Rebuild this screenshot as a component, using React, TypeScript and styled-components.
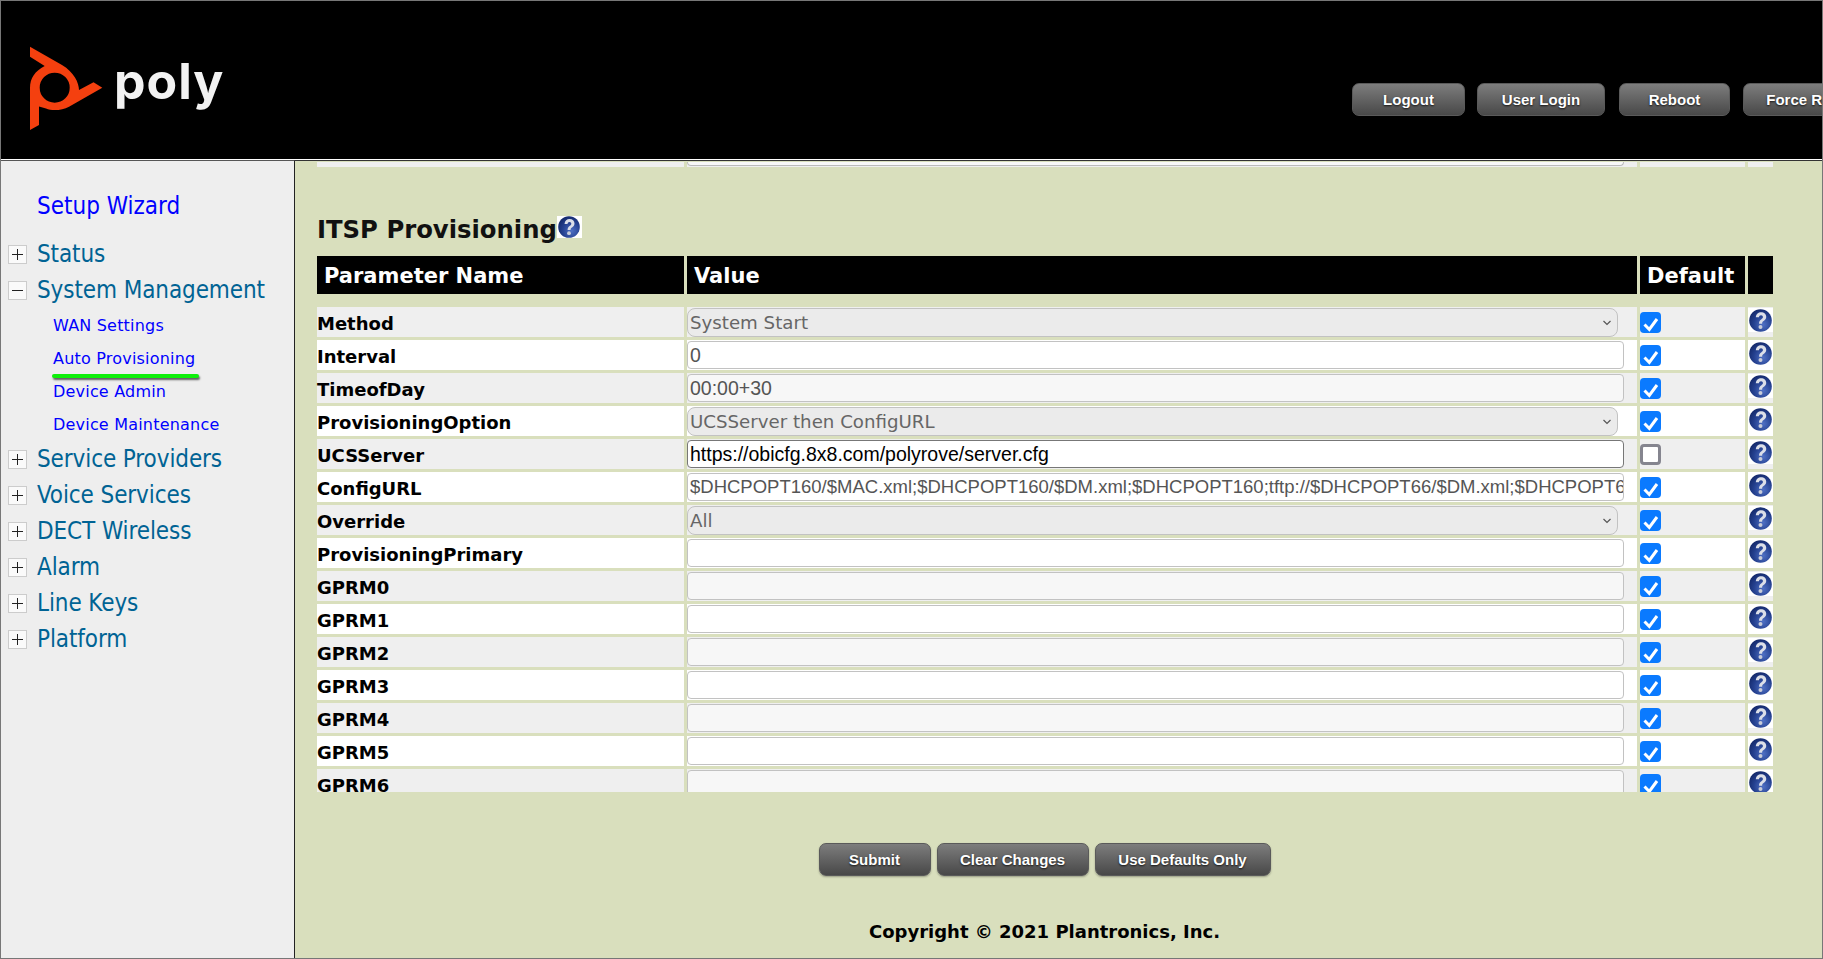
import React from "react";
import styled, { createGlobalStyle } from "styled-components";

const VERDANA = `"DejaVu Sans", sans-serif`;
const HELVETICA = `"Liberation Sans", Arial, sans-serif`;

type Row = {
  name: string;
  kind: "select" | "input";
  value?: string;
  locked?: boolean;
};

const ROWS: Row[] = [
  { name: "Method", kind: "select", value: "System Start", locked: true },
  { name: "Interval", kind: "input", value: "0", locked: true },
  { name: "TimeofDay", kind: "input", value: "00:00+30", locked: true },
  { name: "ProvisioningOption", kind: "select", value: "UCSServer then ConfigURL", locked: true },
  { name: "UCSServer", kind: "input", value: "https://obicfg.8x8.com/polyrove/server.cfg" },
  {
    name: "ConfigURL",
    kind: "input",
    value: "$DHCPOPT160/$MAC.xml;$DHCPOPT160/$DM.xml;$DHCPOPT160;tftp://$DHCPOPT66/$DM.xml;$DHCPOPT66/$MAC.xml",
    locked: true,
  },
  { name: "Override", kind: "select", value: "All", locked: true },
  { name: "ProvisioningPrimary", kind: "input", locked: true },
  { name: "GPRM0", kind: "input", locked: true },
  { name: "GPRM1", kind: "input", locked: true },
  { name: "GPRM2", kind: "input", locked: true },
  { name: "GPRM3", kind: "input", locked: true },
  { name: "GPRM4", kind: "input", locked: true },
  { name: "GPRM5", kind: "input", locked: true },
  { name: "GPRM6", kind: "input", locked: true },
];

const MENU_TOP = ["Status", "System Management"];
const MENU_SUB = ["WAN Settings", "Auto Provisioning", "Device Admin", "Device Maintenance"];
const MENU_BOTTOM = ["Service Providers", "Voice Services", "DECT Wireless", "Alarm", "Line Keys", "Platform"];

const GlobalStyle = createGlobalStyle`
  html, body {
    margin: 0;
    height: 100%;
    overflow: hidden;
    background: #000;
  }
`;

const Page = styled.div`
  width: 1823px;
  height: 959px;
  box-sizing: border-box;
  border: 1px solid #777;
  display: flex;
  flex-direction: column;
  overflow: hidden;
  font-family: ${VERDANA};
`;

const Header = styled.header`
  flex: 0 0 159px;
  box-sizing: border-box;
  background: #000;
  border-bottom: 1px solid #fff;
  display: flex;
  align-items: flex-start;
  overflow: hidden;
`;

const LogoMark = styled.svg`
  margin: 39px 0 0 23px;
  flex: none;
`;

const HeaderButtons = styled.div`
  display: flex;
  flex: none;
  gap: 12px;
  padding-top: 82px;
  margin-left: 1118px;
`;

const GrayButton = styled.button<{ $w: number; $ml?: number }>`
  width: ${(p) => p.$w}px;
  height: 33px;
  margin-left: ${(p) => p.$ml || 0}px;
  padding: 0;
  flex: none;
  border: 1px solid #5a5a5a;
  border-radius: 7px;
  background: linear-gradient(#7d7d7d, #484848);
  box-shadow: 0 1px 2px rgba(0, 0, 0, 0.3);
  color: #fff;
  font: bold 15px ${HELVETICA};
  text-shadow: 0 1px 2px rgba(0, 0, 0, 0.8);
  white-space: nowrap;
`;

const Body = styled.div`
  flex: 1;
  display: flex;
  min-height: 0;
`;

const Sidebar = styled.nav`
  flex: 0 0 294px;
  box-sizing: border-box;
  background: #eee;
  border-top: 1px solid #555;
  border-right: 1px solid #222;
  padding-top: 29px;
`;

const WizardLink = styled.div`
  margin-left: 36px;
  font-size: 24px;
  line-height: 32px;
  height: 46px;
  color: #00f;
  font-stretch: condensed;
`;

const TopItem = styled.div`
  display: flex;
  align-items: center;
  height: 36px;
  color: #006394;
  font-size: 24px;
  font-stretch: condensed;
  letter-spacing: -0.1px;
  white-space: nowrap;
`;

const Toggle = styled.span`
  flex: none;
  width: 19px;
  height: 19px;
  margin: 0 10px 0 7px;
  box-sizing: border-box;
  border: 1px solid #ccc;
  background: #fafafa;
  position: relative;

  &::before {
    content: "";
    position: absolute;
    left: 3px;
    right: 3px;
    top: 8px;
    height: 1px;
    background: #222;
  }
`;

const TogglePlus = styled(Toggle)`
  &::after {
    content: "";
    position: absolute;
    top: 3px;
    bottom: 3px;
    left: 8px;
    width: 1px;
    background: #222;
  }
`;

const SubList = styled.div`
  padding: 1px 0 0 52px;
`;

const SubItem = styled.div`
  position: relative;
  height: 33px;
  line-height: 33px;
  font-size: 16px;
  letter-spacing: 0.2px;
  color: #00f;
  white-space: nowrap;
`;

const GreenUnderline = styled.span`
  position: absolute;
  left: -1px;
  top: 32px;
  width: 147px;
  height: 4px;
  border-radius: 2px;
  background: #0ef00a;
  box-shadow: 1px 2px 2px rgba(0, 0, 0, 0.6);
`;

const Main = styled.main`
  flex: 1;
  min-width: 0;
  background: #d9dfbd;
  border-top: 1px solid #333;
  display: flex;
  flex-direction: column;
`;

const ScrollPort = styled.div`
  flex: none;
  height: 631px;
  box-sizing: border-box;
  overflow: hidden;
  padding: 1px 46px 0 22px;
`;

const Grid = styled.div`
  display: grid;
  grid-template-columns: 367px 950px 105px 25px;
  column-gap: 3px;
`;

const CutCell = styled.div`
  height: 5px;
  background: #efefef;
`;

const CutBox = styled.div`
  box-sizing: border-box;
  width: 937px;
  height: 4px;
  border: 1px solid #bbb;
  border-top: 0;
  border-radius: 0 0 4px 4px;
  background: #f8f8f8;
`;

const Heading = styled.h2`
  margin: 0;
  height: 89px;
  box-sizing: border-box;
  padding-top: 48px;
  font-size: 24.3px;
  line-height: 30px;
  font-weight: bold;
  color: #111;
  display: flex;
  align-items: flex-start;
  white-space: nowrap;
`;

const HeadingHelp = styled.span`
  background: #fff;
  width: 25px;
  height: 22px;
  margin-top: 1px;
  display: flex;
  align-items: center;
  justify-content: center;
`;

const HeadCell = styled.div`
  height: 38px;
  margin-bottom: 13px;
  background: #000;
  color: #fff;
  font-size: 21px;
  font-weight: bold;
  line-height: 40px;
  padding-left: 7px;
  white-space: nowrap;
`;

const NameCell = styled.div<{ $odd: boolean }>`
  height: 30px;
  margin-bottom: 3px;
  background: ${(p) => (p.$odd ? "#fff" : "#efefef")};
  color: #000;
  font-size: 18px;
  font-weight: bold;
  line-height: 33px;
  white-space: nowrap;
`;

const TextBox = styled.div<{ $locked: boolean; $odd: boolean; $long?: boolean }>`
  box-sizing: border-box;
  width: 937px;
  height: 28px;
  margin-top: 1px;
  border: 1px solid ${(p) => (p.$locked ? "#c2c2c2" : "#777")};
  border-radius: 4px;
  padding: 0 2px;
  background: ${(p) => (p.$odd || !p.$locked ? "#fff" : "#f7f7f7")};
  color: ${(p) => (p.$locked ? "#555" : "#000")};
  font: 400 ${(p) => (p.$long ? 18.5 : 19.5)}px/26px ${HELVETICA};
  overflow: hidden;
  white-space: nowrap;
`;

const SelectBox = styled.div`
  box-sizing: border-box;
  width: 931px;
  height: 29px;
  margin-top: 1px;
  border: 1px solid #c2c2c2;
  border-radius: 8px;
  padding: 0 2px;
  background: #ebebeb;
  color: #666;
  font: 400 18.2px/28px ${VERDANA};
  display: flex;
  align-items: center;
  justify-content: space-between;
  white-space: nowrap;
`;

const Chevron = styled.svg`
  margin-right: 3px;
`;

const Check = styled.span<{ $on: boolean }>`
  display: block;
  box-sizing: border-box;
  width: 21px;
  height: 21px;
  margin-top: 5px;
  position: relative;
  border-radius: 4px;
  background: ${(p) => (p.$on ? "#0a7aff" : "#fff")};
  border: ${(p) => (p.$on ? "none" : "3px solid #85858f")};
`;

const HelpCell = styled.div`
  height: 24px;
  background: #fff;
  display: flex;
  align-items: center;
  justify-content: center;
`;

const HelpSlot = styled(NameCell)`
  padding-top: 1px;
  height: 29px;
`;

const FootRow = styled.div`
  display: flex;
  justify-content: center;
  gap: 6px;
  padding: 51px 28px 0 0;
`;

const Copyright = styled.div`
  margin-top: 45px;
  padding-right: 28px;
  text-align: center;
  font-size: 18px;
  font-weight: bold;
  color: #000;
`;

const HelpIcon = ({ id, size = 22 }: { id: string; size?: number }) => (
  <svg width={size} height={size} viewBox="0 0 22 22">
    <defs>
      <radialGradient id={id} cx="0.62" cy="0.68" r="0.7">
        <stop offset="0" stopColor="#4f70c4" />
        <stop offset="0.6" stopColor="#24408f" />
        <stop offset="1" stopColor="#152a6c" />
      </radialGradient>
    </defs>
    <circle cx="11" cy="11" r="10.8" fill={`url(#${id})`} />
    <path
      d="M6.500 8C6.800 4.500 9 3 11.500 3C14.500 3 16.500 4.800 16.500 7.500C16.500 9.500 15.300 10.600 14 11.500C12.800 12.300 12.600 12.800 12.600 14H9.600C9.600 12 10.200 11 11.600 10C12.800 9.100 13.300 8.600 13.300 7.700C13.300 6.600 12.600 5.900 11.500 5.900C10.300 5.900 9.700 6.700 9.500 8Z"
      fill="#dcdfe8"
    />
    <circle cx="11" cy="17.200" r="1.900" fill="#c8ccd8" />
  </svg>
);

const CheckTick = () => (
  <svg width="21" height="21" viewBox="0 0 21 21">
    <path d="M4.500 10.500L9.300 15.500L17 5" fill="none" stroke="#fff" strokeWidth="3" />
  </svg>
);

export default function App() {
  return (
    <>
      <GlobalStyle />
      <Page>
        <Header>
          <LogoMark width="210" height="95" viewBox="0 0 210 95">
            <path
              fillRule="evenodd"
              fill="#f4400f"
              d="M6 6.700L38 25C50 32 55 43 55 50L69.500 42.300L78.300 47.700L45 66.700C38 70.500 28 71 22 68.500L15 66.500V85L6 90V48C6 38 11 31 20.700 26L6 16.700ZM30.700 32.700A15 15 0 1 0 30.700 62.700A15 15 0 1 0 30.700 32.700Z"
            />
            <text x="90" y="59" fill="#f2f2f2" fontFamily="Inter, sans-serif" fontSize="50" fontWeight="700" letterSpacing="1">
              poly
            </text>
          </LogoMark>
          <HeaderButtons>
            <GrayButton $w={113}>Logout</GrayButton>
            <GrayButton $w={128}>User Login</GrayButton>
            <GrayButton $w={111} $ml={2}>Reboot</GrayButton>
            <GrayButton $w={145} $ml={1}>Force Resync</GrayButton>
          </HeaderButtons>
        </Header>
        <Body>
          <Sidebar>
            <WizardLink>Setup Wizard</WizardLink>
            {MENU_TOP.map((m, i) => (
              <TopItem key={m}>
                {i === 0 ? <TogglePlus /> : <Toggle />}
                {m}
              </TopItem>
            ))}
            <SubList>
              {MENU_SUB.map((m) => (
                <SubItem key={m}>
                  {m}
                  {m === "Auto Provisioning" && <GreenUnderline />}
                </SubItem>
              ))}
            </SubList>
            {MENU_BOTTOM.map((m) => (
              <TopItem key={m}>
                <TogglePlus />
                {m}
              </TopItem>
            ))}
          </Sidebar>
          <Main>
            <ScrollPort>
              <Grid>
                <CutCell />
                <CutCell>
                  <CutBox />
                </CutCell>
                <CutCell />
                <CutCell />
              </Grid>
              <Heading>
                ITSP Provisioning
                <HeadingHelp>
                  <HelpIcon id="help-head" />
                </HeadingHelp>
              </Heading>
              <Grid>
                <HeadCell>Parameter Name</HeadCell>
                <HeadCell>Value</HeadCell>
                <HeadCell>Default</HeadCell>
                <HeadCell />
                {ROWS.map((r, i) => {
                  const odd = i % 2 === 1;
                  return (
                    <React.Fragment key={r.name}>
                      <NameCell $odd={odd}>{r.name}</NameCell>
                      <NameCell $odd={odd}>
                        {r.kind === "select" ? (
                          <SelectBox>
                            {r.value}
                            <Chevron width="10" height="8" viewBox="0 0 10 8">
                              <path d="M1.500 2l3.500 3.500L8.500 2" fill="none" stroke="#555" strokeWidth="1.200" />
                            </Chevron>
                          </SelectBox>
                        ) : (
                          <TextBox $locked={!!r.locked} $odd={odd} $long={r.name === "ConfigURL"}>
                            {r.value}
                          </TextBox>
                        )}
                      </NameCell>
                      <NameCell $odd={odd}>
                        <Check $on={!!r.locked}>{r.locked && <CheckTick />}</Check>
                      </NameCell>
                      <HelpSlot $odd={odd}>
                        <HelpCell>
                          <HelpIcon id={`help-${i}`} size={23} />
                        </HelpCell>
                      </HelpSlot>
                    </React.Fragment>
                  );
                })}
              </Grid>
            </ScrollPort>
            <FootRow>
              <GrayButton $w={112}>Submit</GrayButton>
              <GrayButton $w={152}>Clear Changes</GrayButton>
              <GrayButton $w={176}>Use Defaults Only</GrayButton>
            </FootRow>
            <Copyright>Copyright © 2021 Plantronics, Inc.</Copyright>
          </Main>
        </Body>
      </Page>
    </>
  );
}
